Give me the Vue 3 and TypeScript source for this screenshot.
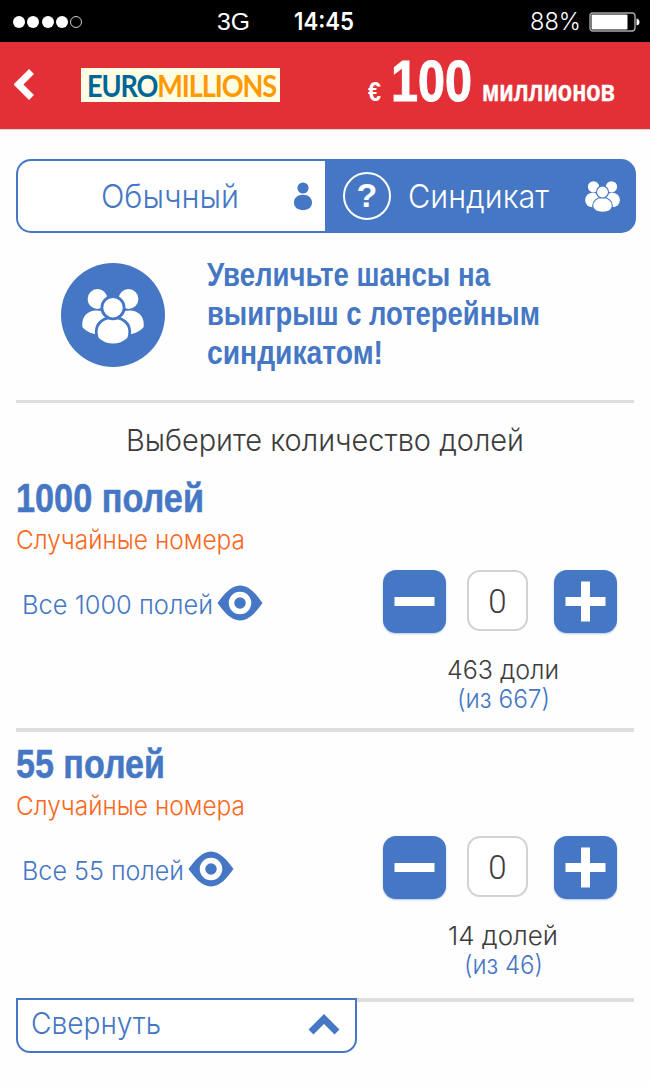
<script setup lang="ts">
import { ref, type Directive } from 'vue'

interface Offer {
  title: string
  titleWidth: number
  all: string
  allWidth: number
  count: number
  left: string
  leftWidth: number
  total: string
  totalWidth: number
}

const offers = ref<Offer[]>([
  { title: '1000 полей', titleWidth: 188, all: 'Все 1000 полей', allWidth: 191, count: 0, left: '463 доли', leftWidth: 112, total: '(из 667)', totalWidth: 93 },
  { title: '55 полей', titleWidth: 149, all: 'Все 55 полей', allWidth: 162, count: 0, left: '14 долей', leftWidth: 110, total: '(из 46)', totalWidth: 79 },
])

// Condenses or expands a label so that it occupies the given width.
const vFit: Directive<HTMLElement, number> = {
  mounted(el, binding) {
    const natural = el.getBoundingClientRect().width
    el.style.transformOrigin = '0 50%'
    el.style.transform = `scaleX(${binding.value / natural})`
    el.style.marginRight = `${binding.value - natural}px`
  },
}

const step = (offer: Offer, delta: number) => {
  offer.count = Math.max(0, offer.count + delta)
}
</script>

<template>
  <div class="page">
    <div class="status">
      <div class="signal"><i v-for="n in 5" :key="n" :class="{ off: n === 5 }" /></div>
      <span class="net"><span v-fit="33" class="t">3G</span></span>
      <span class="time"><span v-fit="60" class="t">14:45</span></span>
      <span class="power"><span v-fit="51" class="t">88%</span></span>
      <svg class="battery" width="51" height="20" viewBox="0 0 51 20">
        <rect x="1" y="1" width="45" height="18" rx="3" fill="none" stroke="#aaa" stroke-width="1.4" />
        <rect x="2.5" y="2.5" width="36" height="15" rx="1" fill="#fff" />
        <path d="M47.5 6.5q3 .5 3 3.5t-3 3.5z" fill="#fff" />
      </svg>
    </div>

    <header class="header">
      <svg class="back" width="20" height="31" viewBox="0 0 20 31">
        <path d="M17.500 2.500 4.500 15.500l13 13" fill="none" stroke="#fff" stroke-width="7" />
      </svg>
      <div class="logo"><span v-fit="189" class="t"><span class="euro">EURO</span>MILLIONS</span></div>
      <div class="jackpot">
        <span v-fit="13" class="t euro-sign">€</span>
        <span v-fit="81" class="t amount">100</span>
        <span v-fit="133" class="t unit">миллионов</span>
      </div>
    </header>

    <nav class="tabs">
      <button class="tab plain">
        <span v-fit="138" class="t">Обычный</span>
        <svg width="18" height="29" viewBox="0 0 18 29" fill="#4577c4">
          <circle cx="9" cy="6" r="5.600" />
          <path d="M9 12.800c5.500 0 9 3.400 9 7.600 0 5-4 7.600-9 7.600s-9-2.600-9-7.600c0-4.200 3.500-7.600 9-7.600z" />
        </svg>
      </button>
      <button class="tab active">
        <span class="help">?</span>
        <span v-fit="141" class="t">Синдикат</span>
        <svg class="group" width="35" height="31" viewBox="0 0 35 31">
          <g fill="#fff">
            <circle cx="8.500" cy="5.800" r="5.600" /><circle cx="26.500" cy="5.800" r="5.600" />
            <ellipse cx="7.600" cy="19" rx="7.500" ry="7.300" /><ellipse cx="27.400" cy="19" rx="7.500" ry="7.300" />
          </g>
          <g fill="#fff" stroke="#4577c4" stroke-width="1.100">
            <path d="M17.500 16.500c5.700 0 9.800 3.500 9.800 8.300 0 4.500-4.500 6.500-9.800 6.500s-9.800-2-9.800-6.500c0-4.800 4.100-8.300 9.800-8.300z" />
            <circle cx="17.500" cy="11" r="6" />
          </g>
        </svg>
      </button>
    </nav>

    <section class="hero">
      <svg class="badge" width="104" height="104" viewBox="0 0 104 104">
        <circle cx="52" cy="52" r="52" fill="#4577c4" />
        <g fill="#fff">
          <circle cx="36.500" cy="36" r="9.900" /><circle cx="67.500" cy="36" r="9.900" />
          <path d="M35 47.500c9 0 15 5 15 12 0 8-2 10-6 12-10 1-18-2-22.700-7.500v-3c0-8 6-13.500 13.700-13.500z" />
          <path d="M69 47.500c-9 0-15 5-15 12 0 8 2 10 6 12 10 1 18-2 22.700-7.500v-3c0-8-6-13.500-13.700-13.500z" />
        </g>
        <g fill="#fff" stroke="#4577c4" stroke-width="2.800">
          <path d="M52 54.300c9.500 0 16.800 6 16.800 14.500 0 3-.5 5-1.300 7-4.500 4-9.500 6.200-15.500 6.200s-11-2.200-15.500-6.200c-.8-2-1.300-4-1.300-7 0-8.500 7.300-14.500 16.800-14.500z" />
          <circle cx="52" cy="44.700" r="11.100" />
        </g>
      </svg>
      <div class="slogan">
        <div><span v-fit="283" class="t">Увеличьте шансы на</span></div>
        <div><span v-fit="333" class="t">выигрыш с лотерейным</span></div>
        <div><span v-fit="176" class="t">синдикатом!</span></div>
      </div>
    </section>

    <h2 class="choose"><span v-fit="398" class="t">Выберите количество долей</span></h2>

    <section v-for="offer in offers" :key="offer.title" class="offer">
      <h3 class="title"><span v-fit="offer.titleWidth" class="t">{{ offer.title }}</span></h3>
      <p class="random"><span v-fit="229" class="t">Случайные номера</span></p>
      <div class="row">
        <a class="all">
          <span v-fit="offer.allWidth" class="t">{{ offer.all }}</span>
          <svg width="46" height="36" viewBox="0 0 46 36">
            <path d="M.5 18C7 9 14 .5 23 .5S39 9 45.500 18C39 27 32 35.500 23 35.500S7 27 .5 18z" fill="#4577c4" />
            <circle cx="23" cy="18" r="8.500" fill="#4577c4" stroke="#fff" stroke-width="5.500" />
          </svg>
        </a>
        <div class="stepper">
          <button class="btn" @click="step(offer, -1)">
            <svg width="63" height="63" viewBox="0 0 63 63"><path d="M11.500 31.500h40" stroke="#fff" stroke-width="9" /></svg>
          </button>
          <div class="count">{{ offer.count }}</div>
          <button class="btn plus" @click="step(offer, 1)">
            <svg width="63" height="63" viewBox="0 0 63 63"><path d="M11.500 31.500h40M31.500 11.500v40" stroke="#fff" stroke-width="9" /></svg>
          </button>
        </div>
      </div>
      <div class="shares">
        <div><span v-fit="offer.leftWidth" class="t">{{ offer.left }}</span></div>
        <div class="total"><span v-fit="offer.totalWidth" class="t">{{ offer.total }}</span></div>
      </div>
    </section>

    <button class="collapse">
      <span v-fit="130" class="t">Свернуть</span>
      <svg width="32" height="21" viewBox="0 0 32 21">
        <path d="M3 18 16 5l13 13" fill="none" stroke="#4577c4" stroke-width="7" />
      </svg>
    </button>
  </div>
</template>

<style>
html,
body {
  margin: 0;
  background: #fefefe;
}
</style>

<style scoped>
.page {
  width: 650px;
  height: 1086px;
  overflow: hidden;
  background: #fefefe;
  color: #3c3c3c;
  font-family: Inter, Roboto, "Liberation Sans", sans-serif;
  font-weight: 300;
}
.page * {
  box-sizing: border-box;
}
button {
  padding: 0;
  border: 0;
  background: none;
  font: inherit;
  color: inherit;
}
svg {
  display: block;
  flex: none;
}
.t {
  display: inline-block;
  flex: none;
  white-space: nowrap;
}
.status {
  display: grid;
  grid-template-columns: 217px 77px 236px 59px 1fr;
  align-items: center;
  height: 42px;
  padding-top: 2px;
  background: #000;
  color: #fff;
  font: 400 24px/40px "Liberation Sans", sans-serif;
}
.signal {
  display: flex;
  gap: 2.3px;
  padding-left: 13px;
}
.signal i {
  width: 12px;
  height: 12px;
  border-radius: 50%;
  background: #fff;
}
.signal .off {
  background: none;
  border: 1px solid #ccc;
}
.time {
  font-family: Inter, sans-serif;
  font-weight: 600;
}
.power {
  font-family: Inter, sans-serif;
  font-weight: 300;
}
.header {
  display: flex;
  align-items: center;
  height: 88px;
  padding: 0 35px 2px 14px;
  border-bottom: 1px solid #d9dada;
  background: #e32f36;
  color: #fff;
}
.back {
  margin-right: 47px;
}
.logo {
  width: 199px;
  height: 34px;
  padding-left: 6px;
  background: #fffde4;
  color: #f90;
  font: 700 29.5px/35px Lato, sans-serif;
  letter-spacing: -1.2px;
}
.euro {
  color: #069;
}
.jackpot {
  display: flex;
  align-items: baseline;
  margin-left: auto;
  padding-top: 4px;
  font-family: "Liberation Sans Narrow", "Liberation Sans", sans-serif;
  font-weight: 700;
}
.euro-sign {
  font-size: 27px;
}
.amount {
  margin-left: 10px;
  font-size: 57px;
  -webkit-text-stroke: 1px #fff;
}
.unit {
  margin-left: 10px;
  font-size: 29px;
  -webkit-text-stroke: 0.4px #fff;
}
.jackpot .t {
  line-height: 70px;
}
.tabs {
  display: grid;
  grid-template-columns: 309px 311px;
  width: 620px;
  height: 74px;
  margin: 29px 0 0 16px;
  font-size: 33px;
  line-height: 70px;
}
.tab {
  display: flex;
  align-items: center;
}
.plain {
  padding: 0 13px 0 83px;
  justify-content: space-between;
  border: 2px solid #4577c4;
  border-right: 0;
  border-radius: 15px 0 0 15px;
  background: #fff;
  color: #4577c4;
}
.active {
  padding: 0 16px 0 18px;
  border-radius: 0 15px 15px 0;
  background: #4577c4;
  color: #fff;
}
.help {
  width: 48px;
  height: 48px;
  margin-right: 17px;
  border: 2px solid #fff;
  border-radius: 50%;
  font: 700 34px/43px "Liberation Sans", sans-serif;
}
.group {
  margin-left: auto;
}
.hero {
  display: flex;
  width: 618px;
  height: 170px;
  margin: 0 0 0 16px;
  padding: 22px 0 0 45px;
  border-bottom: 3px solid #dedede;
  color: #4577c4;
}
.badge {
  margin-top: 8px;
}
.slogan {
  margin-left: 42px;
  font: 700 33.5px/39px "Liberation Sans Narrow", "Liberation Sans", sans-serif;
}
.choose {
  margin: 0;
  height: 71px;
  padding-top: 17px;
  text-align: center;
  font-size: 30px;
  font-weight: 300;
  line-height: 40px;
}
.offer {
  width: 618px;
  height: 258px;
  margin: 0 0 8px 16px;
  border-bottom: 4px solid #dedede;
}
.offer:last-of-type {
  height: 262px;
  margin-bottom: 0;
}
.title {
  margin: 0;
  height: 49px;
  color: #4577c4;
  font: 700 40px/48px "Liberation Sans Narrow", "Liberation Sans", sans-serif;
  -webkit-text-stroke: 0.5px #4577c4;
}
.random {
  margin: 0;
  color: #f9681c;
  font-size: 26px;
  line-height: 34px;
}
.row {
  display: flex;
  justify-content: space-between;
  margin-top: 13px;
  padding: 0 17px 0 6px;
}
.all {
  display: flex;
  align-items: center;
  gap: 4px;
  height: 65px;
  color: #4577c4;
  font-size: 26px;
}
.all .t {
  padding-top: 4px;
}
.stepper {
  display: flex;
  height: 66px;
}
.btn {
  width: 63px;
  height: 63px;
  border-radius: 13px;
  background: #4577c4;
  box-shadow: 0 1px 2px rgba(69, 119, 196, 0.4);
}
.count {
  width: 61px;
  height: 61px;
  margin: 0 26px 0 21px;
  border: 2px solid #d2d2d2;
  border-radius: 13px;
  background: #fff;
  font: 300 33px/59px Roboto, sans-serif;
  text-align: center;
}
.shares {
  width: 240px;
  margin: 20px 0 0 367px;
  text-align: center;
  font-size: 26px;
  line-height: 28.5px;
}
.total {
  color: #4577c4;
}
.collapse {
  position: relative;
  display: flex;
  align-items: center;
  justify-content: space-between;
  width: 341px;
  height: 55px;
  margin: -4px 0 0 16px;
  padding: 0 15px 6px 13px;
  border: 2px solid #4577c4;
  border-radius: 0 0 14px 14px;
  background: #fff;
  color: #4577c4;
  font-size: 30px;
}
.collapse svg {
  margin-top: 4px;
}
</style>
